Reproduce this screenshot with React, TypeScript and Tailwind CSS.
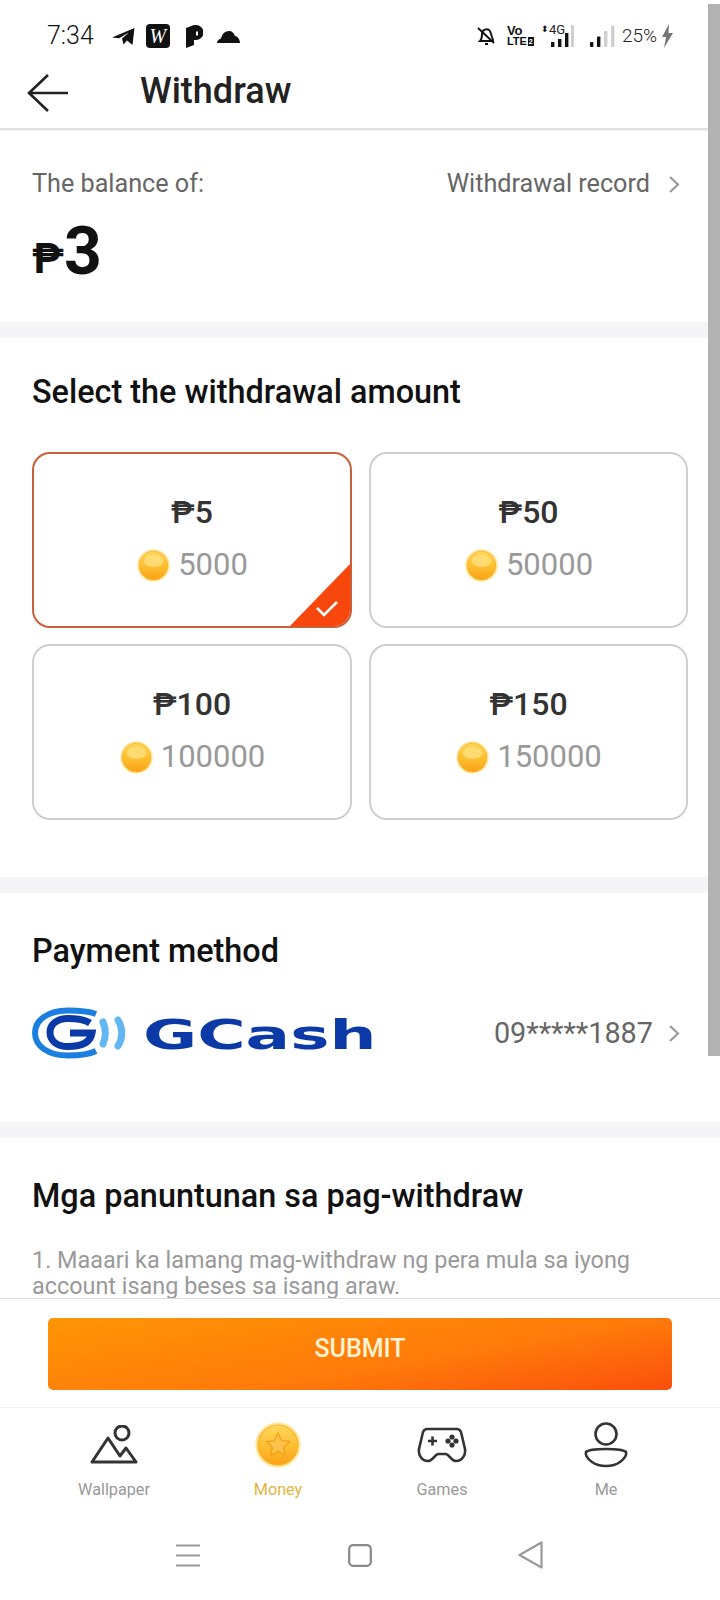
import React from "react";

const Coin = ({ size, star = false, id }: { size: number; star?: boolean; id: string }) => (
  <svg width={size} height={size} viewBox="0 0 44 44" className="shrink-0">
    <defs>
      <linearGradient id={id} x1="0" y1="0" x2="0" y2="1">
        <stop offset="0" stopColor="#ffd75a" />
        <stop offset="0.55" stopColor="#fdbd30" />
        <stop offset="1" stopColor="#f9a316" />
      </linearGradient>
    </defs>
    <circle cx="22" cy="22" r="21.8" fill="#ffe9a0" />
    <circle cx="22" cy="22" r="19.2" fill={`url(#${id})`} stroke="#f7b02a" strokeWidth="1" />
    {star ? (
      <path
        d="M22 10.5l3.4 7.4 8 .9-6 5.4 1.7 7.9-7.1-4-7.1 4 1.7-7.9-6-5.4 8-.9z"
        fill="#fdc24a"
        stroke="#f29f17"
        strokeWidth="1.2"
        strokeLinejoin="round"
      />
    ) : (
      <ellipse cx="22" cy="16" rx="13" ry="8" fill="#ffe283" opacity="0.75" />
    )}
  </svg>
);

const Chevron = () => (
  <svg width="13" height="19" viewBox="0 0 13 19" fill="none" stroke="#999" strokeWidth="2.2" className="shrink-0">
    <path d="M2 2l8 7.5L2 17" />
  </svg>
);

const Bars = ({ on }: { on: number }) => (
  <svg width="28" height="24" viewBox="0 0 28 24" className="shrink-0">
    {[0, 1, 2, 3].map((i) => (
      <rect
        key={i}
        x={2 + i * 7}
        y={18 - i * 5.5}
        width="3.4"
        height={5 + i * 5.5}
        rx="0.8"
        fill={i < on ? "#111" : "#d0d0d0"}
      />
    ))}
  </svg>
);

const Amount = ({ price, coins, active, id }: { price: string; coins: string; active?: boolean; id: string }) => (
  <div
    className={`relative h-[176px] overflow-hidden rounded-[18px] border-2 bg-white flex flex-col items-center ${
      active ? "border-[#c9603a]" : "border-[#cfcfcf]"
    }`}
  >
    <div className="mt-[38px] h-[40px] text-[32px] font-medium leading-[40px] text-[#333]">{price}</div>
    <div className="mt-[13px] flex h-[40px] items-center gap-[8px] pl-[1px]">
      <Coin size={33} id={id} />
      <span className="text-[31px] leading-[40px] text-[#999]">{coins}</span>
    </div>
    {active && (
      <svg width="60" height="62" viewBox="0 0 60 62" className="absolute bottom-0 right-0">
        <path d="M60 0V62H0z" fill="#f7470d" />
        <path d="M27 44l7 7 13-13" fill="none" stroke="#fff" strokeWidth="2.6" />
      </svg>
    )}
  </div>
);

const Tab = ({ icon, label, color }: { icon: React.ReactNode; label: string; color: string }) => (
  <div className="flex flex-col items-center">
    <div className="flex h-[58px] w-full items-center justify-center">{icon}</div>
    <div className={`mt-[6px] text-[16.2px] leading-[20px] ${color}`}>{label}</div>
  </div>
);

export default function App() {
  return (
    <div className="relative flex h-[1600px] w-[720px] flex-col overflow-hidden bg-white font-['Roboto',sans-serif]">
      {/* status bar */}
      <div className="flex h-[66px] shrink-0 items-end pb-[17px] pl-[47px] pr-[46px]">
        <div className="flex h-[26px] w-full items-center">
          <span className="text-[25px] font-light leading-[26px] text-[#111]">7:34</span>
          <svg width="23" height="19" viewBox="0 0 23 19" className="ml-[18px]">
            <path d="M0 10.5L22.5 1 20.5 18 15 13.5 11.5 17.5 10 11.5 17 5.5 7 11.2 0 10.5z" fill="#111" />
          </svg>
          <div className="ml-[11px] flex h-[24px] w-[24px] items-center justify-center rounded-[4px] bg-[#111]">
            <span className="text-[20px] italic leading-[20px] text-white font-['Liberation_Serif',serif]">W</span>
          </div>
          <svg width="17" height="23" viewBox="0 0 17 23" className="ml-[16px]">
            <path d="M0 3l8-3h2a7.5 7.5 0 0 1 0 15H8v5l-8 3z" fill="#111" />
            <path d="M10 6.5h2v4h-2z" fill="#fff" />
          </svg>
          <svg width="23" height="15" viewBox="0 0 23 15" className="ml-[14px]">
            <path d="M0 14c0-2 1.500-4 4-4.500C5 5 8 2 12 2c3 0 5 2 6 5 3 0 5 4 5 7z" fill="#111" />
          </svg>
          <div className="flex-1" />
          <svg width="19" height="20" viewBox="0 0 19 20" fill="none" stroke="#111" strokeWidth="1.9">
            <path d="M3 15c2-2 2-4 2-7a4.500 4.500 0 0 1 8-3l3 9v1z" />
            <path d="M1 2l16 15M8 18h3" />
          </svg>
          <div className="ml-[11px] flex w-[25px] flex-col text-[#111] font-['Liberation_Sans',sans-serif] font-bold">
            <span className="text-[13px] leading-[10px]">Vo</span>
            <span className="flex items-center text-[11px] leading-[11px]">
              LTE<span className="ml-[1px] bg-[#111] px-[1px] text-[7px] leading-[9px] text-white">2</span>
            </span>
          </div>
          <div className="relative ml-[9px] h-[24px] w-[34px]">
            <span className="absolute left-[8px] top-[-1px] text-[13px] leading-[14px] text-[#222]">4G</span>
            <span className="absolute left-0 top-[0px] text-[9px] leading-[11px] text-[#111]">⬍</span>
            <div className="absolute bottom-0 left-[8px]">
              <svg width="26" height="24" viewBox="0 0 26 24">
                <rect x="2" y="18" width="3.4" height="5" fill="#111" />
                <rect x="9" y="15" width="3.4" height="8" fill="#111" />
                <rect x="16" y="9" width="3.4" height="14" fill="#111" />
                <rect x="22" y="1" width="3" height="22" fill="#d0d0d0" />
              </svg>
            </div>
          </div>
          <div className="ml-[13px]">
            <Bars on={2} />
          </div>
          <span className="ml-[6px] text-[19px] font-light leading-[24px] text-[#222]">25%</span>
          <svg width="13" height="24" viewBox="0 0 13 24" className="ml-[4px]">
            <path d="M8 0L1 13h4l-2 11 9-15H7.500z" fill="#777" />
          </svg>
        </div>
      </div>

      {/* header */}
      <div className="flex h-[64px] shrink-0 items-center border-b-2 border-[#e0e0e0] pb-[8px] pl-[27px]">
        <svg width="41" height="38" viewBox="0 0 41 38" fill="none" stroke="#222" strokeWidth="2.6">
          <path d="M21 1L2 19l19 18M2 19h39" />
        </svg>
        <h1 className="mb-[4px] ml-[72px] text-[36px] font-medium leading-[40px] text-[#222]">Withdraw</h1>
      </div>

      {/* scrolling content */}
      <div className="min-h-0 flex-1 overflow-hidden">
        <section className="h-[192px] border-t border-[#f3f3f3] bg-white px-[32px] pt-[37px]">
          <div className="flex h-[32px] items-center justify-between pr-[7px]">
            <span className="text-[25.2px] leading-[32px] text-[#666]">The balance of:</span>
            <span className="flex items-center gap-[18px] text-[25.2px] leading-[32px] text-[#666]">
              Withdrawal record
              <Chevron />
            </span>
          </div>
          <div className="mt-[16px] flex h-[72px] items-end font-bold leading-none text-[#111]">
            <span className="text-[43px] leading-[60px]">₱</span>
            <span className="text-[66px] leading-[72px]">3</span>
          </div>
        </section>
        <div className="h-[16px] bg-[#f5f5f8]" />

        <section className="h-[539px] bg-white px-[32px] pt-[33px]">
          <h2 className="text-[32.4px] font-medium leading-[42px] text-[#111]">Select the withdrawal amount</h2>
          <div className="mt-[39px] grid grid-cols-[320px_319px] gap-x-[17px] gap-y-[16px]">
            <Amount price="₱5" coins="5000" active id="c1" />
            <Amount price="₱50" coins="50000" id="c2" />
            <Amount price="₱100" coins="100000" id="c3" />
            <Amount price="₱150" coins="150000" id="c4" />
          </div>
        </section>
        <div className="h-[16px] bg-[#f5f5f8]" />

        <section className="h-[229px] bg-white px-[32px] pt-[37px]">
          <h2 className="text-[32.4px] font-medium leading-[42px] text-[#111]">Payment method</h2>
          <div className="mt-[36px] flex h-[50px] items-center justify-between pr-[7px]">
            <div className="flex items-center">
              <svg width="96" height="52" viewBox="0 0 96 52" fill="none">
                <path d="M64 7C56 4 46 3.500 36 3.500 16 3.500 3 13 3 26s13 22.500 33 22.500c10 0 20-.5 28-4.500" stroke="#1b7fe0" strokeWidth="6" />
                <path d="M58 16C52 12 44 11.500 36 11.500 24 11.500 18 18 18 25.500s6 14 18 14c12 0 22-2.500 24-13.500H38" stroke="#0a3aa8" strokeWidth="7" />
                <path d="M71 15c3 7 3 15 0 22" stroke="#62b6f2" strokeWidth="7" strokeLinecap="round" />
                <path d="M86 13c5 8 5 18 0 26" stroke="#62b6f2" strokeWidth="7" strokeLinecap="round" />
              </svg>
              <span className="ml-[15px] mt-[3px] inline-block w-[148px] origin-left scale-x-[1.61] font-['DejaVu_Sans',sans-serif] text-[41px] font-bold leading-[50px] text-[#0b39a6]">
                GCash
              </span>
            </div>
            <span className="flex items-center gap-[15px] text-[28.8px] leading-[40px] text-[#666]">
              09*****1887
              <Chevron />
            </span>
          </div>
        </section>
        <div className="h-[16px] bg-[#f5f5f8]" />

        <section className="h-[160px] overflow-hidden bg-white px-[32px] pt-[37px]">
          <h2 className="text-[32.4px] font-medium leading-[42px] text-[#111]">Mga panuntunan sa pag-withdraw</h2>
          <p className="mt-[30px] text-[23.4px] leading-[26px] text-[#999]">
            1. Maaari ka lamang mag-withdraw ng pera mula sa iyong account isang beses sa isang araw.
          </p>
        </section>

        <div className="h-[109px] border-t border-[#dcdcdc] bg-white px-[48px] pt-[19px]">
          <button className="flex h-[72px] w-full items-center justify-center rounded-[5px] bg-[linear-gradient(170deg,#ff9505,#ff7a0a_60%,#fb4f0c)] pb-[10px] text-[25px] font-medium text-[#fff3d6]">
            SUBMIT
          </button>
        </div>

        <div className="grid grid-cols-4 border-t border-[#f3f3f3] bg-white px-[32px] pt-[8px]">
          <Tab
            label="Wallpaper"
            color="text-[#999]"
            icon={
              <svg width="48" height="40" viewBox="0 0 48 40" fill="none" stroke="#333" strokeWidth="3" strokeLinejoin="round">
                <circle cx="32" cy="8" r="7" />
                <path d="M2 37L18 13l12 18 6-8 10 14z" />
              </svg>
            }
          />
          <Tab label="Money" color="text-[#e3b33f]" icon={<Coin size={46} star id="c5" />} />
          <Tab
            label="Games"
            color="text-[#999]"
            icon={
              <svg width="50" height="36" viewBox="0 0 50 36" fill="none" stroke="#333" strokeWidth="2.6" strokeLinejoin="round">
                <path d="M10 2h30c2 0 3 1 4 3l4 17c1 6-3 12-9 12-5 0-6-6-10-7H21c-4 1-5 7-10 7-6 0-10-6-9-12L6 5c1-2 2-3 4-3z" />
                <path d="M11 14h9M15.500 9.500v9" />
                <circle cx="31" cy="14" r="1.300" fill="#333" />
                <circle cx="39" cy="14" r="1.300" fill="#333" />
                <circle cx="35" cy="10" r="1.300" fill="#333" />
                <circle cx="35" cy="18" r="1.300" fill="#333" />
              </svg>
            }
          />
          <Tab
            label="Me"
            color="text-[#999]"
            icon={
              <svg width="46" height="46" viewBox="0 0 46 46" fill="none" stroke="#333" strokeWidth="2.6">
                <circle cx="23" cy="12" r="10.500" />
                <path d="M3 30c2-2 8-3 20-3s18 1 20 3c1 3-2 7-6 10-4 3-9 4-14 4s-10-1-14-4c-4-3-7-7-6-10z" />
              </svg>
            }
          />
        </div>

        <div className="mt-[44px] grid grid-cols-3 px-[102px]">
          <div className="flex justify-center">
            <svg width="24" height="23" viewBox="0 0 24 23" stroke="#999" strokeWidth="2.200">
              <path d="M0 1.500h24M0 11.500h24M0 21.500h24" />
            </svg>
          </div>
          <div className="flex justify-center">
            <svg width="24" height="23" viewBox="0 0 24 23" fill="none" stroke="#888" strokeWidth="2.200">
              <rect x="1.200" y="1.200" width="21.600" height="20.600" rx="4" />
            </svg>
          </div>
          <div className="flex justify-center">
            <svg width="25" height="28" viewBox="0 0 25 28" fill="none" stroke="#999" strokeWidth="2.200" strokeLinejoin="round" className="mr-[4px] mt-[-3px]">
              <path d="M23.500 1.500v25L1.500 14z" />
            </svg>
          </div>
        </div>
      </div>

      {/* overlay scrollbar */}
      <div className="absolute right-0 top-[4px] h-[1052px] w-[12px] bg-[#b2b2b2]" />
    </div>
  );
}
